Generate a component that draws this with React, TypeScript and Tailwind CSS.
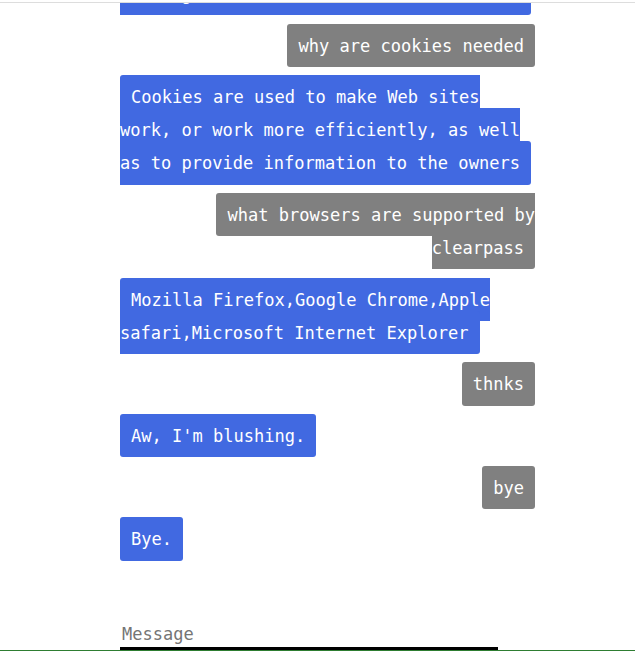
import React from "react";

type Msg = { from: "user" | "bot"; text: React.ReactNode };

const messages: Msg[] = [
  {
    from: "bot",
    text: (
      <>
        ClearPass is a network access control solution that lets IT manage policies for every device.
        <br />
        Users get secure access to the network.
      </>
    ),
  },
  { from: "user", text: "why are cookies needed" },
  {
    from: "bot",
    text: "Cookies are used to make Web sites work, or work more efficiently, as well as to provide information to the owners",
  },
  { from: "user", text: "what browsers are supported by clearpass" },
  {
    from: "bot",
    text: "Mozilla Firefox,Google Chrome,Apple safari,Microsoft Internet Explorer",
  },
  { from: "user", text: "thnks" },
  { from: "bot", text: "Aw, I'm blushing." },
  { from: "user", text: "bye" },
  { from: "bot", text: "Bye." },
];

export default function App() {
  return (
    <div className="h-[656px] w-full overflow-hidden bg-white font-['DejaVu_Sans_Mono',monospace] text-[17.04px]">
      <div className="h-[2px]" />
      <div className="flex h-[564px] flex-col justify-end overflow-hidden border-t border-[#dddddd] pb-[10px]">
        <div className="ml-[120px] flex w-[415px] flex-col gap-[18.67px] leading-[33px]">
          {messages.map((m, i) => (
            <div key={i} className={m.from === "user" ? "text-right" : "text-left"}>
              <span
                className={
                  m.from === "user"
                    ? "rounded-[3px] bg-[#808080] px-[11px] py-[11.6px] text-white"
                    : "rounded-[3px] bg-[#4169e1] px-[11px] py-[11.6px] text-white"
                }
              >
                {m.text}
              </span>
            </div>
          ))}
        </div>
      </div>
      <div className="flex h-[85px] items-end border-b border-[#2e7d32] pl-[120px]">
        <input
          placeholder="Message"
          className="h-[30px] w-[378px] border-b-[3px] border-black px-[2px] text-[17px] text-black outline-none placeholder:text-[#757575]"
        />
      </div>
    </div>
  );
}
